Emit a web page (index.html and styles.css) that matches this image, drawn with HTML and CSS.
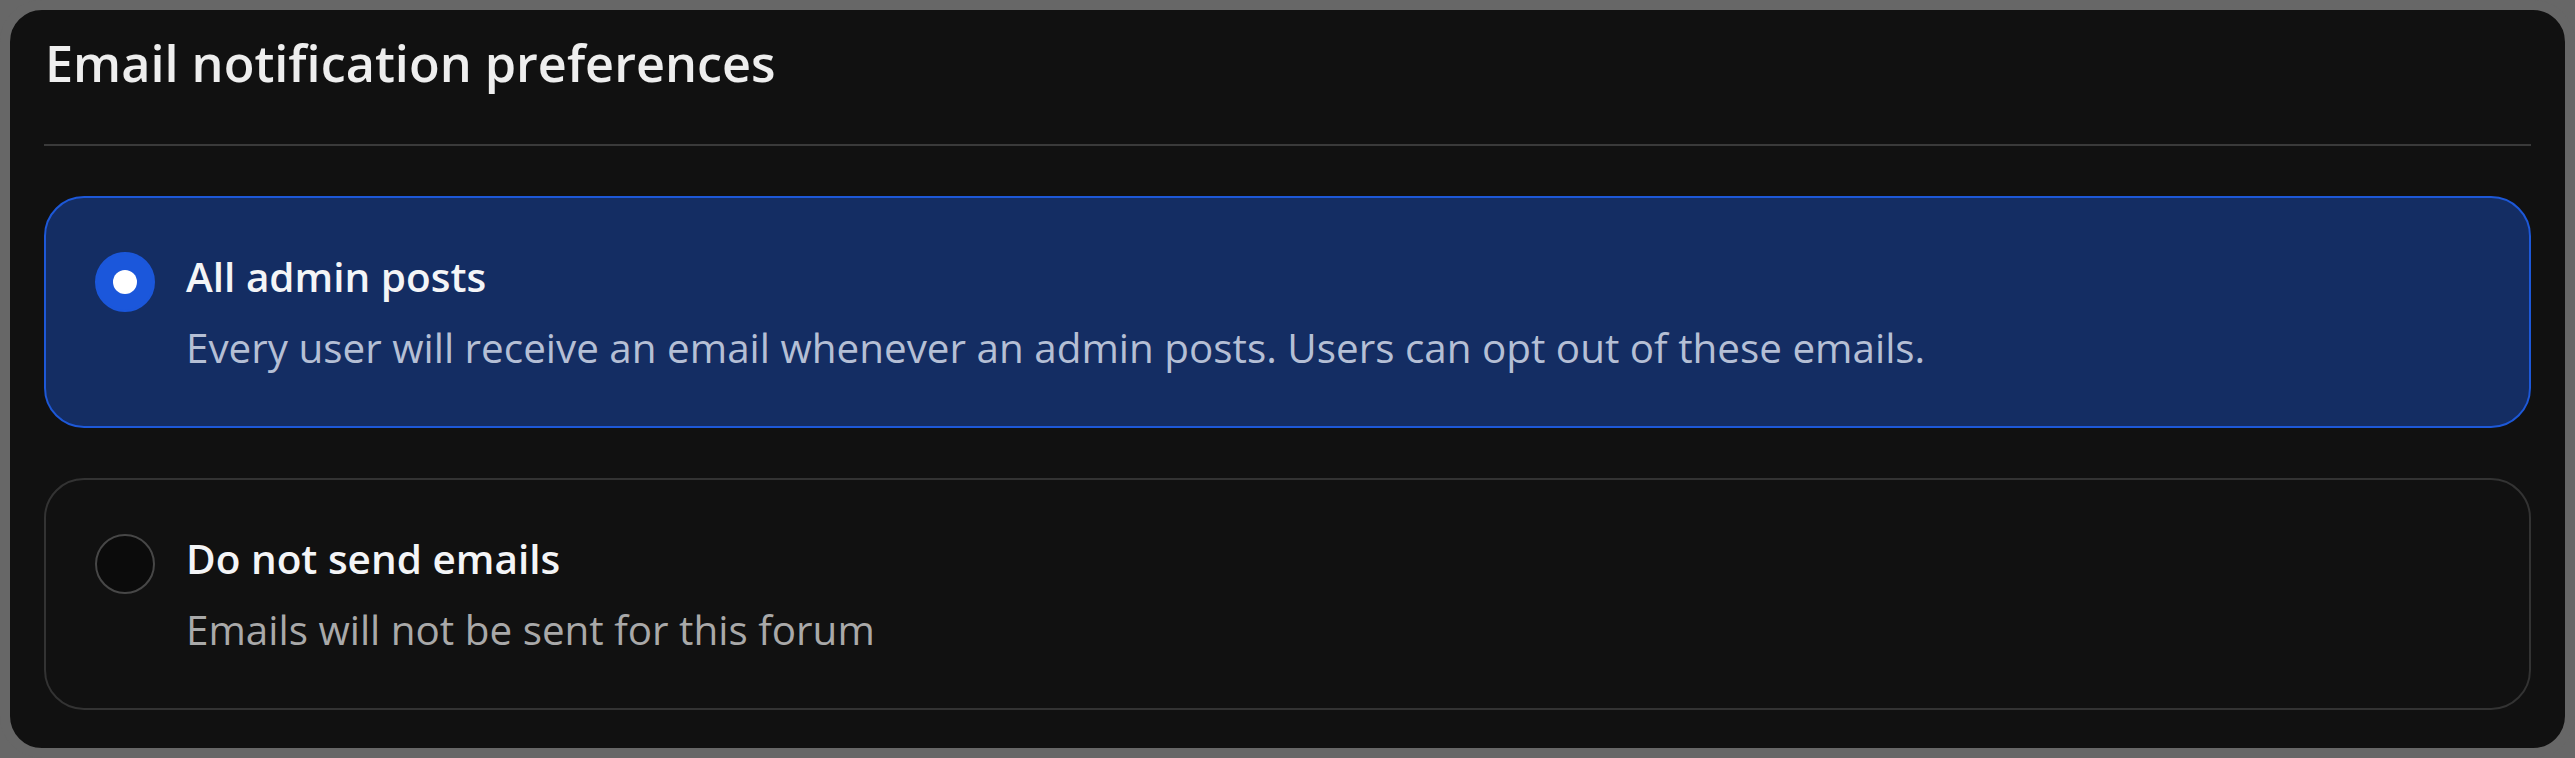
FILE: index.html
```html
<!DOCTYPE html>
<html lang="en">
<head>
<meta charset="utf-8">
<title>Email notification preferences</title>
<link rel="stylesheet" href="styles.css">
</head>
<body>
<section class="panel">
  <h2 class="panel-title">Email notification preferences</h2>
  <hr class="divider">
  <div class="options">
    <label class="option option-selected">
      <input class="radio" type="radio" name="email-pref" checked>
      <span class="option-text">
        <span class="option-label">All admin posts</span>
        <span class="option-desc">Every user will receive an email whenever an admin posts. Users can opt out of these emails.</span>
      </span>
    </label>
    <label class="option">
      <input class="radio" type="radio" name="email-pref">
      <span class="option-text">
        <span class="option-label">Do not send emails</span>
        <span class="option-desc">Emails will not be sent for this forum</span>
      </span>
    </label>
  </div>
</section>
</body>
</html>
```
FILE: styles.css
```css
* { box-sizing: border-box; }
html, body { margin: 0; padding: 0; background: #676767; }
body { font-family: "Open Sans", "Noto Sans", sans-serif; }

.panel {
  width: 2575px;
  height: 758px;
  background: #111111;
  border: 10px solid #676767;
  border-radius: 42px;
  padding: 23px 34px 0 34px;
  display: flex;
  flex-direction: column;
}

.panel-title {
  margin: 0 0 0 1px;
  font-size: 50.4px;
  font-weight: 600;
  line-height: 60px;
  color: #eeeeee;
}

.divider {
  margin: 51px 0 0 0;
  border: 0;
  height: 2px;
  background: #3a3a3a;
}

.options {
  margin-top: 50px;
  display: flex;
  flex-direction: column;
  gap: 50px;
}

.option {
  display: flex;
  align-items: flex-start;
  gap: 31px;
  height: 232px;
  padding: 51px 48px 0 49px;
  border: 2px solid #333333;
  border-radius: 40px;
  background: #111111;
}

.option-selected {
  background: #142d63;
  border-color: #1d58d8;
}

.radio {
  appearance: none;
  -webkit-appearance: none;
  margin: 3px 0 0 0;
  flex: none;
  width: 60px;
  height: 60px;
  border-radius: 50%;
  border: 2px solid #474747;
  background: #0b0b0b;
  display: grid;
  place-items: center;
}

.radio:checked {
  border-color: #1b57db;
  background: #1b57db;
}

.radio:checked::after {
  content: "";
  width: 24px;
  height: 24px;
  border-radius: 50%;
  background: #ffffff;
}

.option-text {
  display: flex;
  flex-direction: column;
  gap: 15px;
}

.option-label {
  font-size: 40.5px;
  font-weight: 600;
  line-height: 56px;
  color: #f4f5f7;
}

.option-desc {
  font-size: 40.4px;
  font-weight: 400;
  line-height: 56px;
  color: #a9a9a9;
}

.option-selected .option-desc {
  color: #b5bfd5;
}
```
